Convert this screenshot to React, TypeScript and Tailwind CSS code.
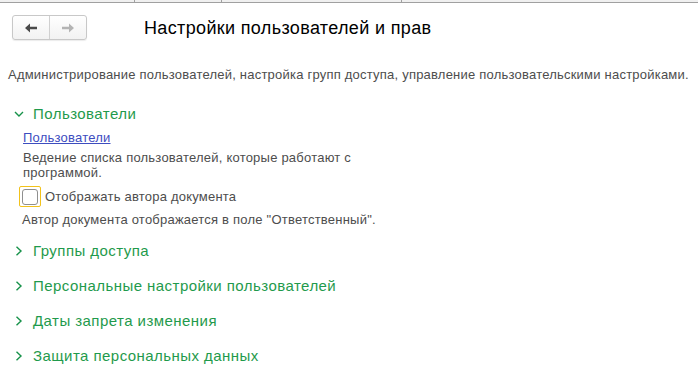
import {useState} from "react";

const green = "text-[#1f9a4c]";

const Chevron = ({open}: {open: boolean}) => (
    <svg width="10" height="10" viewBox="0 0 10 10" className="shrink-0">
        {open ? (
            <path d="M1 3 L5 7 L9 3" fill="none" stroke="#17924a" strokeWidth="1.4"/>
        ) : (
            <path d="M2.5 0.8 L7 5 L2.5 9.2" fill="none" stroke="#17924a" strokeWidth="1.4"/>
        )}
    </svg>
);

const Section = ({title, open, children}: { title: string, open?: boolean, children?: React.ReactNode }) => (
    <div>
        <div className={`flex items-center h-[18px] pl-[14px] gap-[9px] text-[15px] tracking-[0.45px] ${green}`}>
            <Chevron open={!!open}/>
            <span>{title}</span>
        </div>
        {open && children}
    </div>
);

const Arrow = ({dir, color}: { dir: 'left' | 'right', color: string }) => (
    <svg width="14" height="10" viewBox="0 0 14 10">
        {dir === 'left' ? (
            <path d="M1 5 L6 0.5 L6 3.8 L13 3.8 L13 6.2 L6 6.2 L6 9.5 Z" fill={color}/>
        ) : (
            <path d="M13 5 L8 0.5 L8 3.8 L1 3.8 L1 6.2 L8 6.2 L8 9.5 Z" fill={color}/>
        )}
    </svg>
);

export default function App() {
    const [checked, setChecked] = useState(false);

    return (
        <div className="w-[698px] h-[374px] bg-white overflow-hidden text-[#4d4d4d]"
             style={{fontFamily: '"Liberation Sans", Arial, sans-serif'}}>
            <div className="flex h-[3px] bg-[#f0f0f0] border-b border-[#a0a0a0]">
                <div className="w-[135px] border-r border-[#a0a0a0]"/>
                <div className="w-[87px] border-r border-[#a0a0a0]"/>
                <div className="w-[180px] border-r border-[#a0a0a0]"/>
                <div className="flex-1"/>
            </div>

            <div className="flex items-center mt-[12px] h-[25px]">
                <div className="ml-[12px] flex h-[25px] w-[75px] rounded-[3px] border border-[#c8c8c8] bg-gradient-to-b from-white to-[#f2f2f2] shadow-[0_1px_1px_rgba(0,0,0,0.08)]">
                    <button className="w-[37px] flex items-center justify-center border-r border-[#d0d0d0]">
                        <Arrow dir="left" color="#4a4a4a"/>
                    </button>
                    <button className="flex-1 flex items-center justify-center">
                        <Arrow dir="right" color="#b4b4b4"/>
                    </button>
                </div>
                <h1 className="ml-[57px] text-[18px] tracking-[0.35px] text-black leading-none">
                    Настройки пользователей и прав
                </h1>
            </div>

            <p className="mt-[27px] ml-[8px] text-[13px] leading-[15px] tracking-[0.22px]">
                Администрирование пользователей, настройка групп доступа, управление пользовательскими настройками.
            </p>

            <div className="mt-[23px] flex flex-col text-[13px] tracking-[0.22px]">
                <Section title="Пользователи" open>
                    <div className="pl-[23px] pt-[7px] leading-[15px]">
                        <a href="#" className="text-[#3d4dbf] underline">Пользователи</a>
                        <p className="mt-[5px] w-[350px]">
                            Ведение списка пользователей, которые работают с программой.
                        </p>
                    </div>
                    <label className="flex items-center mt-[6px] ml-[19px] gap-[4px] cursor-pointer">
                        <span className="w-[22px] h-[21px] flex items-center justify-center border border-[#f2c21b] rounded-[2px]">
                            <span className="w-[16px] h-[16px] border border-[#8f8f8f] rounded-[3px] bg-white">
                                {checked && <span className="block text-[12px] leading-[14px] text-center">✓</span>}
                            </span>
                            <input type="checkbox" className="hidden" checked={checked}
                                   onChange={() => setChecked(!checked)}/>
                        </span>
                        <span>Отображать автора документа</span>
                    </label>
                    <p className="mt-[5px] ml-[22px] leading-[15px]">
                        Автор документа отображается в поле "Ответственный".
                    </p>
                </Section>
                <div className="mt-[15px] flex flex-col gap-[17px]">
                    <Section title="Группы доступа"/>
                    <Section title="Персональные настройки пользователей"/>
                    <Section title="Даты запрета изменения"/>
                    <Section title="Защита персональных данных"/>
                </div>
            </div>
        </div>
    );
}
